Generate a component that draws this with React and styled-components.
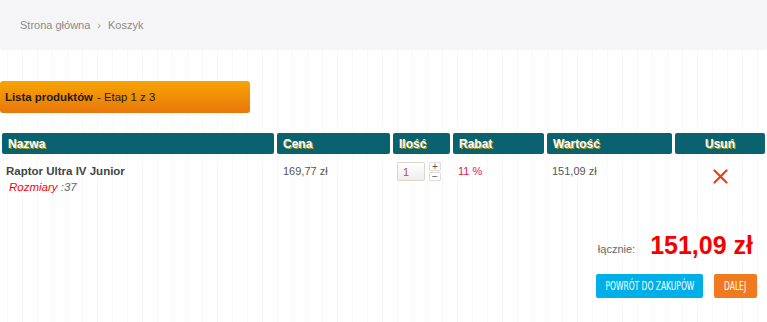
import styled, { createGlobalStyle } from 'styled-components';

const GlobalStyle = createGlobalStyle`
	body {
		margin: 0;
		font-family: Arial, "Liberation Sans", sans-serif;
		background-color: #fff;
		background-image: repeating-linear-gradient(90deg, transparent 0 7px, #f8f8f8 7px 8px, transparent 8px 15px);
	}
`;

const Page = styled.div`
	width: 767px;
	height: 322px;
	overflow: hidden;
`;

const Breadcrumbs = styled.div`
	display: flex;
	align-items: center;
	gap: 7px;
	height: 50px;
	padding-left: 20px;
	background: #f5f5f7;
	border-radius: 0 0 3px 3px;
	font-size: 11px;
	color: #8a8a8a;
`;

const Crumb = styled.span`
	color: #8a8a8a;
`;

const Separator = styled.span`
	font-size: 11px;
	color: #999;
	margin-top: -1px;
`;

const StepBar = styled.div`
	margin-top: 31px;
	width: 245px;
	height: 32px;
	padding-left: 5px;
	display: flex;
	align-items: center;
	border-radius: 3px;
	background: linear-gradient(#f7a404, #e8770a);
	font-size: 11.4px;
	color: #1f1a10;
`;

const StepTitle = styled.b`
	margin-right: 4px;
`;

const Grid = styled.div`
	display: grid;
	grid-template-columns: 272px 113px 57px 91px 125px 90px;
	column-gap: 3px;
	padding-left: 2px;
	margin-top: 20px;
`;

const HeadCell = styled.div`
	height: 21px;
	display: flex;
	align-items: center;
	justify-content: ${p => (p.$center ? 'center' : 'flex-start')};
	padding-left: ${p => (p.$center ? '0' : '6px')};
	background: #09626d;
	border-radius: 2px;
	color: #fff;
	font-weight: bold;
	font-size: 12px;
	text-shadow: 1px 1px 0 #b59a1a;
`;

const Cell = styled.div`
	padding-top: 11px;
	padding-left: ${p => (p.$center ? 0 : (p.$pad || 5))}px;
	font-size: 11px;
	color: #555;
	height: 60px;
	box-sizing: border-box;
	display: flex;
	flex-direction: column;
	align-items: ${p => (p.$center ? 'center' : 'flex-start')};
`;

const ProductName = styled.b`
	color: #444;
	font-size: 11.5px;
`;

const Sizes = styled.i`
	margin-top: 4px;
	margin-left: 3px;
	color: #666;
	font-size: 11.5px;
`;

const SizesLabel = styled.span`
	color: #f00;
`;

const Discount = styled.span`
	color: #e8115a;
`;

const QtyWrap = styled.div`
	display: flex;
	gap: 4px;
	margin-top: -3px;
`;

const QtyInput = styled.div`
	width: 28px;
	height: 19px;
	box-sizing: border-box;
	border: 1px solid #ddd6c6;
	border-radius: 2px;
	background: linear-gradient(#fff, #eeeeee);
	font-size: 11px;
	color: #b05070;
	padding: 3px 0 0 5px;
`;

const QtyButtons = styled.div`
	display: flex;
	flex-direction: column;
	gap: 1px;
`;

const QtyButton = styled.div`
	width: 12px;
	height: 9px;
	box-sizing: border-box;
	border: 1px solid #ddd;
	border-radius: 1px;
	display: flex;
	align-items: center;
	justify-content: center;
	font-size: 10px;
	line-height: 1;
	color: #555;
`;

const Summary = styled.div`
	display: flex;
	flex-direction: column;
	align-items: flex-end;
	padding-right: 10px;
	margin-top: 17px;
`;

const TotalRow = styled.div`
	display: flex;
	align-items: center;
	gap: 15px;
	padding-right: 4px;
`;

const TotalLabel = styled.span`
	font-size: 11px;
	color: #666;
	margin-top: 6px;
`;

const TotalValue = styled.span`
	font-size: 25px;
	font-weight: bold;
	color: #f50000;
`;

const Buttons = styled.div`
	display: flex;
	gap: 11px;
	margin-top: 14px;
`;

const Button = styled.div`
	width: ${p => p.$w}px;
	height: 24px;
	display: flex;
	align-items: center;
	justify-content: center;
	border-radius: 2px;
	background: ${p => p.$color};
	color: #fff;
	font-family: "DejaVu Sans Condensed", "DejaVu Sans", sans-serif;
	font-size: 11.5px;
	white-space: nowrap;
`;

const ButtonLabel = styled.span`
	display: inline-block;
	flex-shrink: 0;
	transform: scaleX(0.73);
`;

const RemoveIcon = () => (
	<svg width="15" height="15" viewBox="0 0 15 15" style={{ marginTop: 4 }}>
		<path d="M1.5 1.5 L13.5 13.5 M13.5 1.5 L1.5 13.5" stroke="#e8401c" strokeWidth="2.2" strokeLinecap="round" />
	</svg>
);

export default function App() {
	return (
		<Page>
			<GlobalStyle />
			<Breadcrumbs>
				<Crumb>Strona główna</Crumb>
				<Separator>›</Separator>
				<Crumb>Koszyk</Crumb>
			</Breadcrumbs>

			<StepBar>
				<StepTitle>Lista produktów</StepTitle> - Etap 1 z 3
			</StepBar>

			<Grid>
				<HeadCell>Nazwa</HeadCell>
				<HeadCell>Cena</HeadCell>
				<HeadCell>Ilość</HeadCell>
				<HeadCell>Rabat</HeadCell>
				<HeadCell>Wartość</HeadCell>
				<HeadCell $center>Usuń</HeadCell>

				<Cell $pad={4}>
					<ProductName>Raptor Ultra IV Junior</ProductName>
					<Sizes><SizesLabel>Rozmiary</SizesLabel> :37</Sizes>
				</Cell>
				<Cell $pad={6}>169,77 zł</Cell>
				<Cell $pad={4}>
					<QtyWrap>
						<QtyInput>1</QtyInput>
						<QtyButtons>
							<QtyButton>+</QtyButton>
							<QtyButton>−</QtyButton>
						</QtyButtons>
					</QtyWrap>
				</Cell>
				<Cell><Discount>11 %</Discount></Cell>
				<Cell>151,09 zł</Cell>
				<Cell $center><RemoveIcon /></Cell>
			</Grid>

			<Summary>
				<TotalRow>
					<TotalLabel>łącznie:</TotalLabel>
					<TotalValue>151,09 zł</TotalValue>
				</TotalRow>
				<Buttons>
					<Button $color="#00aee8" $w={107}><ButtonLabel>POWRÓT DO ZAKUPÓW</ButtonLabel></Button>
					<Button $color="#ef7a20" $w={43}><ButtonLabel>DALEJ</ButtonLabel></Button>
				</Buttons>
			</Summary>
		</Page>
	);
}
